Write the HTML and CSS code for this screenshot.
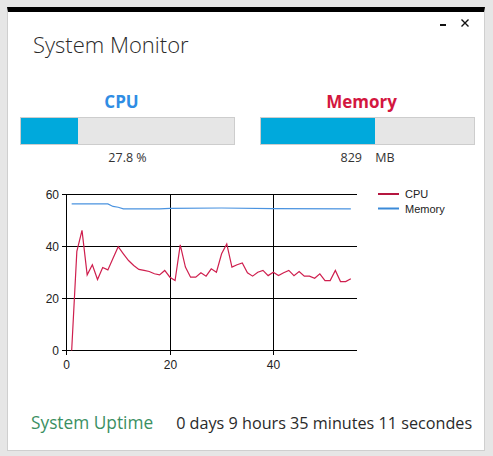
FILE: index.html
```html
<!DOCTYPE html>
<html>
<head>
<meta charset="utf-8">
<title>System Monitor</title>
<link rel="stylesheet" href="styles.css">
</head>
<body>
<div class="window">
  <div class="header">
    <h1 class="title">System Monitor</h1>
    <div class="controls">
      <svg class="ctl" width="10" height="10" viewBox="0 0 10 10"><rect x="2" y="6" width="6" height="2" fill="#111"/></svg>
      <svg class="ctl" width="10" height="10" viewBox="0 0 10 10"><path d="M1.5 1.5 L8.5 8.5 M8.5 1.5 L1.5 8.5" stroke="#111" stroke-width="1.4" fill="none"/></svg>
    </div>
  </div>

  <div class="meters">
    <div class="meter">
      <div class="meter-title cpu">CPU</div>
      <div class="bar"><div class="fill" style="width:26.8%"></div></div>
      <div class="meter-value">27.8 %</div>
    </div>
    <div class="meter">
      <div class="meter-title mem">Memory</div>
      <div class="bar"><div class="fill" style="width:53.5%"></div></div>
      <div class="meter-value">829 <span class="unit">MB</span></div>
    </div>
  </div>

  <svg class="chart" width="476" height="200" viewBox="0 0 476 200">
    <g transform="translate(-8,-180)">
      <g class="grid" stroke="#000" stroke-width="1" shape-rendering="crispEdges">
        <line x1="62" y1="194.5" x2="357" y2="194.5"/>
        <line x1="62" y1="246.5" x2="357" y2="246.5"/>
        <line x1="62" y1="298.5" x2="357" y2="298.5"/>
        <line x1="62" y1="350.5" x2="357" y2="350.5"/>
        <line x1="66.5" y1="194" x2="66.5" y2="355"/>
        <line x1="170.5" y1="194" x2="170.5" y2="355"/>
        <line x1="273.5" y1="194" x2="273.5" y2="355"/>
      </g>
      <g class="axis-labels" font-family="'Liberation Sans', Arial, sans-serif" font-size="12" fill="#222">
        <text x="59" y="199" text-anchor="end">60</text>
        <text x="59" y="251" text-anchor="end">40</text>
        <text x="59" y="303" text-anchor="end">20</text>
        <text x="59" y="355" text-anchor="end">0</text>
        <text x="66.5" y="369" text-anchor="middle">0</text>
        <text x="170.5" y="369" text-anchor="middle">20</text>
        <text x="273.5" y="369" text-anchor="middle">40</text>
      </g>
      <g transform="translate(66.5,350.5) scale(5.17,-2.6)" fill="none">
        <polyline vector-effect="non-scaling-stroke" stroke="#4a93e0" stroke-width="1.2"
          points="1,56.4 8,56.4 9,55.4 10,55.1 11,54.5 18,54.5 20,54.7 30,54.8 40,54.6 55,54.5"/>
        <polyline vector-effect="non-scaling-stroke" stroke="#cf1f4e" stroke-width="1.2"
          points="1,0 2,38.1 3,46.2 4,29.1 5,33 6,27.3 7,31.9 8,31 9,35.5 10,39.9 11,37.2 12,34.6 13,32.7 14,31.2 15,30.8 16,30.4 17,29.5 18,29.1 19,30.8 20,28.2 21,26.9 22,40.6 23,32.1 24,28.2 25,28.2 26,29.9 27,28.6 28,31.4 29,30.1 30,37.2 31,41 32,32.1 33,33 34,33.7 35,29.9 36,28.6 37,30.1 38,30.8 39,28.8 40,30.1 41,28.8 42,29.9 43,30.8 44,28.8 45,30.4 46,28.6 47,28.6 48,27.8 49,29.5 50,26.9 51,26.9 52,30.8 53,26.5 54,26.5 55,27.6"/>
      </g>
      <g class="legend" font-family="'Liberation Sans', Arial, sans-serif" font-size="11" fill="#222">
        <line x1="378" y1="194" x2="399" y2="194" stroke="#b5163f" stroke-width="2"/>
        <text x="405" y="198">CPU</text>
        <line x1="378" y1="208.5" x2="399" y2="208.5" stroke="#3b8ad8" stroke-width="2"/>
        <text x="405" y="213">Memory</text>
      </g>
    </g>
  </svg>

  <div class="uptime">
    <span class="uptime-label">System Uptime</span>
    <span class="uptime-value">0 days 9 hours 35 minutes 11 secondes</span>
  </div>
</div>
</body>
</html>
```

FILE: styles.css
```css
* { box-sizing: border-box; }
html, body { margin: 0; padding: 0; }
body {
  background: #e6e6e6;
  font-family: "Open Sans", "Noto Sans", sans-serif;
  color: #222;
  padding: 7px 0 0 7px;
  height: 456px;
}
.window {
  width: 478px;
  height: 444px;
  background: #fff;
  border: 1px solid #cfcfcf;
  border-top: 5px solid #000;
  display: flex;
  flex-direction: column;
}
.header {
  display: flex;
  justify-content: space-between;
  align-items: flex-start;
  height: 52px;
}
.title {
  margin: 17px 0 0 25px;
  font-weight: 300;
  font-size: 22px;
  line-height: 30px;
  color: #2a2a2a;
}
.controls {
  display: flex;
  gap: 12px;
  margin: 6px 14px 0 0;
}
.ctl { display: block; }
.meters {
  display: grid;
  grid-template-columns: 215px 215px;
  column-gap: 25px;
  padding-left: 12px;
  margin-top: 26px;
}
.meter { display: flex; flex-direction: column; }
.meter-title {
  text-align: center;
  font-weight: 700;
  font-size: 17px;
  line-height: 24px;
  padding-right: 12px;
}
.meter-title.cpu { color: #2f8de4; }
.meter-title.mem { color: #d3173f; }
.bar {
  margin-top: 3px;
  height: 28px;
  background: #e6e6e6;
  border: 1px solid #cdcdcd;
}
.fill { height: 100%; background: #00a9dc; }
.meter-value {
  text-align: center;
  font-size: 12.5px;
  line-height: 18px;
  margin-top: 4px;
  color: #333;
}
.unit { margin-left: 10px; }
.chart { display: block; margin-top: 13px; }
.uptime {
  display: flex;
  align-items: baseline;
  gap: 23px;
  padding-left: 23px;
  margin-top: 31px;
}
.uptime-label { color: #3a8f62; font-size: 17.3px; }
.uptime-value { color: #2a2a2a; font-size: 16.2px; }
```
